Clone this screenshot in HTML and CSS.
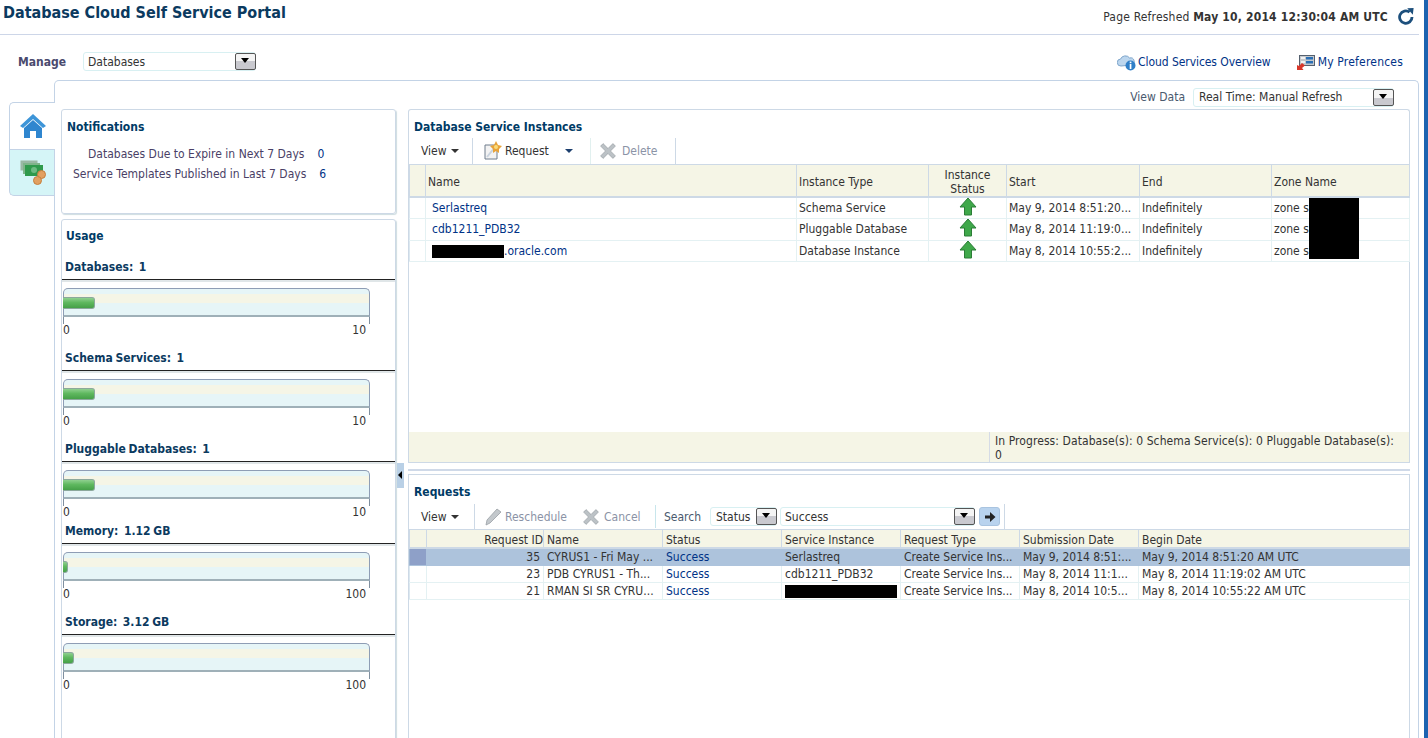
FILE: index.html
```html
<!DOCTYPE html>
<html lang="en">
<head>
    <meta charset="UTF-8">
    <title>Database Cloud Self Service Portal</title>
    <link rel="stylesheet" href="styles.css">
</head>
<body>
    <header class="top-bar">
        <h1>Database Cloud Self Service Portal</h1>
        <div class="refreshed">
            <span>Page Refreshed <b>May 10, 2014 12:30:04 AM UTC</b></span>
            <svg class="refresh-icon" width="18" height="18" viewBox="0 0 18 18">
                <path d="M12.6 5.2A6.2 6.2 0 1 0 15 10" fill="none" stroke="#1c4f7c" stroke-width="2.8"/>
                <path d="M10.2 1.2 L16.6 1 L15.8 7.8 Z" fill="#1c4f7c"/>
            </svg>
        </div>
    </header>

    <div class="manage-row">
        <label class="manage-label">Manage</label>
        <div class="select select-manage"><span>Databases</span><i class="select-btn"></i></div>
        <nav class="top-links">
            <a href="#" class="cloud-link">
                <svg width="19" height="18" viewBox="0 0 19 18">
                    <path d="M4 13 A3.5 3.5 0 0 1 3.6 6 A5 4.5 0 0 1 12.6 5 A3.6 3.6 0 0 1 14.5 12 L4 13Z" fill="#bcd6ee" stroke="#7fa6cc"/>
                    <circle cx="13.5" cy="12.5" r="5" fill="#2f7fc8"/>
                    <rect x="12.7" y="11" width="1.7" height="5" fill="#fff"/>
                    <rect x="12.7" y="8.6" width="1.7" height="1.6" fill="#fff"/>
                </svg>
                Cloud Services Overview
            </a>
            <a href="#" class="prefs-link">
                <svg width="20" height="18" viewBox="0 0 20 18">
                    <rect x="3.5" y="2.5" width="15" height="10" fill="#c4c8cc" stroke="#55606e"/>
                    <rect x="10" y="4" width="7" height="2.5" fill="#2a6fb5"/>
                    <rect x="10" y="8" width="7" height="2.5" fill="#2a6fb5"/>
                    <rect x="5" y="4" width="4" height="2" fill="#f2f2f2"/>
                    <rect x="5" y="8" width="4" height="2" fill="#f2f2f2"/>
                    <path d="M1 17 L1 12 L3 13 L6 10 L9 12.5 L6 15 L7.5 17 Z" fill="#d8372a"/>
                </svg>
                My Preferences
            </a>
        </nav>
    </div>

    <div class="workspace">
        <div class="side-tabs">
            <div class="side-tab side-tab-active">
                <svg width="28" height="26" viewBox="0 0 28 26">
                    <path d="M1 13 L14 1 L27 13 L24 15 L14 6 L4 15 Z" fill="#3d95d8"/>
                    <path d="M5 15 L14 7 L23 15 V25 H17 V18 H11 V25 H5 Z" fill="#2f86cf"/>
                </svg>
            </div>
            <div class="side-tab">
                <svg width="28" height="26" viewBox="0 0 28 26">
                    <rect x="2.5" y=".5" width="17" height="10" fill="#9ab8a4"/>
                    <rect x="5" y="3" width="17" height="11" fill="#7fb48a"/>
                    <rect x="7" y="5" width="18" height="11" fill="#2f9a4c"/>
                    <circle cx="16" cy="10" r="3" fill="#6dbb82"/>
                    <circle cx="23.5" cy="14.5" r="4" fill="#e2a060" stroke="#c57f3d"/>
                    <circle cx="19.5" cy="20.5" r="4" fill="#e2a060" stroke="#c57f3d"/>
                </svg>
            </div>
        </div>

        <div class="content">
            <div class="view-data">
                <span class="view-label">View Data</span>
                <div class="select select-view"><span>Real Time: Manual Refresh</span><i class="select-btn"></i></div>
            </div>

            <div class="columns">
                <aside class="left-col">
                    <section class="panel notifications">
                        <h2>Notifications</h2>
                        <div class="notice notice-first"><span>Databases Due to Expire in Next 7 Days</span><a href="#">0</a></div>
                        <div class="notice notice-second"><span>Service Templates Published in Last 7 Days</span><a href="#">6</a></div>
                    </section>

                    <section class="panel usage">
                        <h2>Usage</h2>

                        <h3>Databases:&nbsp; 1</h3>
                        <div class="meter">
                            <div class="track"><div class="fill" style="width: 32px"></div></div>
                            <div class="scale"><span>0</span><span>10</span></div>
                        </div>

                        <h3>Schema Services:&nbsp; 1</h3>
                        <div class="meter">
                            <div class="track"><div class="fill" style="width: 32px"></div></div>
                            <div class="scale"><span>0</span><span>10</span></div>
                        </div>

                        <h3>Pluggable Databases:&nbsp; 1</h3>
                        <div class="meter meter-short">
                            <div class="track"><div class="fill" style="width: 32px"></div></div>
                            <div class="scale"><span>0</span><span>10</span></div>
                        </div>

                        <h3>Memory:&nbsp; 1.12 GB</h3>
                        <div class="meter">
                            <div class="track"><div class="fill" style="width: 5px"></div></div>
                            <div class="scale"><span>0</span><span>100</span></div>
                        </div>

                        <h3>Storage:&nbsp; 3.12 GB</h3>
                        <div class="meter">
                            <div class="track"><div class="fill" style="width: 11px"></div></div>
                            <div class="scale"><span>0</span><span>100</span></div>
                        </div>
                    </section>
                </aside>

                <button class="collapse-handle"></button>

                <main class="right-col">
                    <section class="instances">
                        <h2>Database Service Instances</h2>
                        <div class="toolbar">
                            <div class="tool tool-view">View <i class="caret"></i></div>
                            <div class="tool tool-request">
                                <svg width="20" height="20" viewBox="0 0 20 20">
                                    <path d="M2 4 H14 V18 H2 Z" fill="#f3f3f3" stroke="#6f7d8c"/>
                                    <path d="M4 16 L12 6" stroke="#c9d3de" stroke-width="2"/>
                                    <path d="M13 0 L15 4 L19 5 L16 8 L16 12 L13 10 L10 12 L10 8 L7 5 L11 4 Z" fill="#e8a33a"/>
                                    <circle cx="13" cy="6" r="2" fill="#f9dc7a"/>
                                </svg>
                                Request <i class="caret caret-request"></i>
                            </div>
                            <div class="tool tool-disabled tool-delete">
                                <svg width="16" height="16" viewBox="1.5 1.5 13 13">
                                    <path d="M2 4 L4 2 L8 6 L12 2 L14 4 L10 8 L14 12 L12 14 L8 10 L4 14 L2 12 L6 8 Z" fill="#bcc2c6" stroke="#9aa1a6" stroke-width=".6"/>
                                </svg>
                                Delete
                            </div>
                        </div>

                        <div class="table-wrap">
                            <table class="grid grid-instances">
                                <colgroup>
                                    <col class="c-16"><col class="c-371"><col class="c-132"><col class="c-78"><col class="c-133"><col class="c-132"><col>
                                </colgroup>
                                <thead>
                                    <tr>
                                        <th></th><th>Name</th><th>Instance Type</th>
                                        <th class="center">Instance<br>Status</th>
                                        <th>Start</th><th>End</th><th>Zone Name</th>
                                    </tr>
                                </thead>
                                <tbody>
                                    <tr>
                                        <td></td><td class="pad-name"><a href="#">Serlastreq</a></td><td>Schema Service</td>
                                        <td class="center"><svg class="up-arrow" width="18" height="19" viewBox="0 0 18 19"><path d="M9 1 L17 10 H12.5 V18 H5.5 V10 H1 Z" fill="#3fa84a" stroke="#2b7d36"/></svg></td>
                                        <td>May 9, 2014 8:51:20...</td><td>Indefinitely</td><td>zone s</td>
                                    </tr>
                                    <tr>
                                        <td></td><td class="pad-name"><a href="#">cdb1211_PDB32</a></td><td>Pluggable Database</td>
                                        <td class="center"><svg class="up-arrow" width="18" height="19" viewBox="0 0 18 19"><path d="M9 1 L17 10 H12.5 V18 H5.5 V10 H1 Z" fill="#3fa84a" stroke="#2b7d36"/></svg></td>
                                        <td>May 8, 2014 11:19:0...</td><td>Indefinitely</td><td>zone s</td>
                                    </tr>
                                    <tr>
                                        <td></td><td class="pad-name"><i class="redact redact-host"></i><a href="#">.oracle.com</a></td><td>Database Instance</td>
                                        <td class="center"><svg class="up-arrow" width="18" height="19" viewBox="0 0 18 19"><path d="M9 1 L17 10 H12.5 V18 H5.5 V10 H1 Z" fill="#3fa84a" stroke="#2b7d36"/></svg></td>
                                        <td>May 8, 2014 10:55:2...</td><td>Indefinitely</td><td>zone s</td>
                                    </tr>
                                </tbody>
                            </table>
                            <div class="redact-zone"></div>
                        </div>

                        <div class="status-bar">
                            <div class="status-text">In Progress: Database(s): 0 Schema Service(s): 0 Pluggable Database(s): 0</div>
                        </div>
                    </section>

                    <div class="splitter"></div>

                    <section class="requests">
                        <h2>Requests</h2>
                        <div class="toolbar toolbar-requests">
                            <div class="tool tool-view tool-view-req">View <i class="caret"></i></div>
                            <div class="tool tool-disabled tool-reschedule">
                                <svg width="18" height="18" viewBox="0 0 18 18">
                                    <path d="M2 17 L3 12 L13 1 L17 4 L6 15 Z" fill="#c3c8cc" stroke="#9aa1a6" stroke-width=".8"/>
                                </svg>
                                Reschedule
                            </div>
                            <div class="tool tool-disabled tool-cancel">
                                <svg width="16" height="16" viewBox="1.5 1.5 13 13">
                                    <path d="M2 4 L4 2 L8 6 L12 2 L14 4 L10 8 L14 12 L12 14 L8 10 L4 14 L2 12 L6 8 Z" fill="#bcc2c6" stroke="#9aa1a6" stroke-width=".6"/>
                                </svg>
                                Cancel
                            </div>
                            <div class="search-box">
                                <span class="search-label">Search</span>
                                <div class="select select-status"><span>Status</span><i class="select-btn"></i></div>
                                <div class="select select-success"><span>Success</span><i class="select-btn"></i></div>
                                <button class="go-btn">
                                    <svg width="12" height="12" viewBox="0 0 12 12"><path d="M1 4.5 H6 V1 L11.5 6 L6 11 V7.5 H1 Z" fill="#222"/></svg>
                                </button>
                            </div>
                        </div>

                        <table class="grid grid-requests">
                            <colgroup>
                                <col class="c-17"><col class="c-117"><col class="c-119"><col class="c-119"><col class="c-119"><col class="c-119"><col class="c-119"><col>
                            </colgroup>
                            <thead>
                                <tr>
                                    <th></th><th class="right">Request ID</th><th>Name</th><th>Status</th>
                                    <th>Service Instance</th><th>Request Type</th><th>Submission Date</th><th>Begin Date</th>
                                </tr>
                            </thead>
                            <tbody>
                                <tr class="selected">
                                    <td class="row-head"></td><td class="right">35</td><td>CYRUS1 - Fri May ...</td><td><a href="#">Success</a></td>
                                    <td>Serlastreq</td><td>Create Service Ins...</td><td>May 9, 2014 8:51:...</td><td>May 9, 2014 8:51:20 AM UTC</td>
                                </tr>
                                <tr>
                                    <td></td><td class="right">23</td><td>PDB CYRUS1 - Th...</td><td><a href="#">Success</a></td>
                                    <td>cdb1211_PDB32</td><td>Create Service Ins...</td><td>May 8, 2014 11:1...</td><td>May 8, 2014 11:19:02 AM UTC</td>
                                </tr>
                                <tr>
                                    <td></td><td class="right">21</td><td>RMAN SI SR CYRU...</td><td><a href="#">Success</a></td>
                                    <td><i class="redact redact-service"></i></td><td>Create Service Ins...</td><td>May 8, 2014 10:5...</td><td>May 8, 2014 10:55:22 AM UTC</td>
                                </tr>
                            </tbody>
                        </table>
                    </section>
                </main>
            </div>
        </div>
    </div>
</body>
</html>
```

FILE: styles.css
```css
* {
    margin: 0;
    padding: 0;
    box-sizing: border-box;
}

html, body {
    height: 738px;
    overflow: hidden;
}

body {
    font-family: "DejaVu Sans Condensed", "DejaVu Sans", sans-serif;
    font-stretch: condensed;
    font-size: 12px;
    color: #333;
    background: #fff;
    border-right: 4px solid #1c63b0;
    width: 1428px;
}

a {
    color: #003286;
    text-decoration: none;
}

h1 {
    font-size: 16px;
    color: #0b3a5f;
    line-height: 26px;
}

h2 {
    font-size: 12px;
    color: #003b66;
    line-height: 16px;
}

/* top of page */
.top-bar {
    display: flex;
    justify-content: space-between;
    height: 35px;
    width: 1419px;
    padding-left: 3px;
    border-bottom: 1px solid #cdd6e8;
}

.refreshed {
    display: flex;
    align-items: flex-start;
    gap: 9px;
    padding-top: 7px;
    padding-right: 4px;
}

.refreshed span {
    line-height: 18px;
    padding-top: 1px;
    letter-spacing: .19px;
}

.manage-row {
    display: flex;
    align-items: center;
    height: 45px;
    width: 1419px;
    padding: 8px 16px 0 18px;
}

.manage-label {
    font-weight: bold;
    color: #4a4a6e;
    width: 65px;
}

.top-links {
    margin-left: auto;
    display: flex;
    gap: 25px;
}

.top-links a {
    display: flex;
    align-items: center;
    gap: 2px;
}

.cloud-link {
    letter-spacing: -.06px;
}

.prefs-link {
    letter-spacing: .2px;
}

/* select boxes */
.select {
    display: flex;
    justify-content: space-between;
    align-items: center;
    height: 19px;
    padding-left: 4px;
    border: 1px solid #d8f0f2;
    border-radius: 3px;
    background: #fff;
}

.select-manage {
    width: 173px;
}

.select-view {
    width: 201px;
    padding-left: 5px;
}

.select-status {
    width: 67px;
    padding-left: 5px;
}

.select-success {
    width: 195px;
    margin-left: 3px;
    padding-left: 4px;
}

.select-btn {
    position: relative;
    width: 21px;
    height: 17px;
    margin-right: -1px;
    border: 1px solid #555;
    border-radius: 2px;
    background: linear-gradient(#f4f4f4 50%, #c9c9cf 50%);
}

.select-btn::after {
    content: "";
    position: absolute;
    left: 5px;
    top: 4px;
    border-left: 4.5px solid transparent;
    border-right: 4.5px solid transparent;
    border-top: 5px solid #000;
}

/* main area */
.workspace {
    display: flex;
    padding-left: 9px;
    width: 1419px;
}

.side-tabs {
    width: 45px;
    padding-top: 22px;
}

.side-tab {
    display: flex;
    justify-content: center;
    align-items: center;
    height: 47px;
    background: #d5f5f7;
    border: 1px solid #c3d3e6;
    border-right: none;
    border-bottom-left-radius: 5px;
}

.side-tab-active {
    height: 47px;
    background: #fff;
    border-bottom: none;
    border-radius: 5px 0 0 0;
    margin-right: -1px;
    position: relative;
}

.content {
    flex: 1;
    height: 660px;
    border: 1px solid #c3d3e6;
    border-bottom: none;
    border-top-left-radius: 5px;
    border-top-right-radius: 5px;
    padding-left: 6px;
    padding-right: 8px;
}

.view-data {
    display: flex;
    justify-content: flex-end;
    align-items: center;
    gap: 8px;
    height: 28px;
    padding-top: 4px;
    padding-right: 16px;
}

.view-label {
    color: #4a5a6e;
}

.columns {
    display: flex;
    position: relative;
}

.left-col {
    width: 335px;
    flex: none;
}

.panel {
    border: 1px solid #cdd9e6;
    border-radius: 3px;
    box-shadow: 1px 1px 1px #cfdde0;
}

.notifications {
    height: 105px;
    padding: 9px 4px 0 5px;
}

.notice {
    color: #4a3f66;
    white-space: nowrap;
    line-height: 20px;
}

.notice a {
    margin-left: 13px;
}

.notice-first {
    padding-left: 21px;
    margin-top: 9px;
}

.notice-second {
    padding-left: 6px;
}

.usage {
    height: 530px;
    margin-top: 5px;
    padding-top: 8px;
}

.usage h2 {
    padding-left: 4px;
    margin-bottom: 15px;
}

.usage h3 {
    font-size: 12px;
    color: #0b3a5f;
    line-height: 16px;
    height: 21px;
    padding-left: 3px;
    word-spacing: -1px;
    border-bottom: 1px solid #222;
    box-shadow: 0 2px 0 #e0e6e8;
}

.meter {
    margin-left: 1px;
    padding-top: 8px;
    width: 307px;
    height: 70px;
}

.meter-short {
    height: 61px;
}

.track {
    position: relative;
    height: 29px;
    border: 1px solid #8e9db5;
    border-bottom: 2px solid #9fb0b8;
    border-radius: 5px 5px 0 0;
    background: linear-gradient(#e6f5f7 5px, #f5f5e6 5px, #f5f5e6 14px, #e6f5f7 14px);
}

.fill {
    position: absolute;
    left: -1px;
    top: 8px;
    height: 12px;
    border: 1px solid #8ba89c;
    border-left: none;
    border-radius: 0 3px 3px 0;
    background: linear-gradient(#8fd08f, #5fb85f 45%, #45a048);
}

/* the two end ticks are just 7px tall */
.scale {
    display: flex;
    justify-content: space-between;
    height: 20px;
    padding: 6px 4px 0 0;
    line-height: 14px;
    background:
        linear-gradient(#7f8f9f, #7f8f9f) left top / 1px 7px no-repeat,
        linear-gradient(#7f8f9f, #7f8f9f) right top / 1px 7px no-repeat;
}

/* right side */
.right-col {
    margin-left: 12px;
    width: 1002px;
    flex: none;
}

.collapse-handle {
    position: absolute;
    left: 336px;
    top: 354px;
    width: 7px;
    height: 25px;
    border: none;
    background: #b9d0e6;
}

.collapse-handle::after {
    content: "";
    position: absolute;
    left: 1px;
    top: 8px;
    border-top: 4px solid transparent;
    border-bottom: 4px solid transparent;
    border-right: 4px solid #000;
}

.instances {
    position: relative;
    height: 354px;
    border: 1px solid #cdd9e6;
    border-bottom: none;
    border-radius: 3px 3px 0 0;
    padding-top: 9px;
}

.instances h2,
.requests h2 {
    padding-left: 5px;
}

.toolbar {
    display: flex;
    height: 27px;
    margin-top: 3px;
    border-bottom: 1px solid #cdd9e6;
}

.tool {
    display: flex;
    align-items: center;
    height: 26px;
    white-space: nowrap;
}

.tool-view {
    width: 64px;
    padding-left: 12px;
    gap: 4px;
    border-right: 1px solid #cdd9e6;
}

.tool-request {
    width: 118px;
    padding-left: 10px;
    gap: 2px;
    border-right: 1px solid #e1f0ef;
}

.tool-delete {
    width: 85px;
    padding-left: 9px;
    gap: 6px;
    border-right: 1px solid #cdd9e6;
}

.tool-disabled {
    color: #8b93a6;
}

.caret {
    border-left: 4px solid transparent;
    border-right: 4px solid transparent;
    border-top: 4px solid #333;
}

.caret-request {
    margin-left: 14px;
    border-top-color: #1c3f6e;
}

.table-wrap {
    position: relative;
}

.grid {
    table-layout: fixed;
    border-collapse: collapse;
    width: 1001px;
}

.c-16 { width: 16px; }
.c-17 { width: 17px; }
.c-78 { width: 78px; }
.c-117 { width: 117px; }
.c-119 { width: 119px; }
.c-132 { width: 132px; }
.c-133 { width: 133px; }
.c-371 { width: 371px; }

.grid th {
    background: #f5f5e6;
    font-weight: normal;
    text-align: left;
    padding: 2px 2px 0;
    border: 1px solid #cdd9e6;
    border-top: none;
    border-bottom-width: 2px;
    line-height: 14px;
    color: #333;
}

.grid td {
    padding: 0 2px;
    border: 1px solid #e4f1f3;
    border-left-color: #dce8f0;
    white-space: nowrap;
    overflow: hidden;
}

.grid-instances th {
    height: 32px;
}

.grid-instances td {
    height: 21.5px;
}

.grid-requests th {
    height: 18px;
    padding: 2px 0 0 3px;
}

.grid-requests td {
    height: 17px;
    line-height: 16px;
    padding: 0 3px;
}

.pad-name {
    padding-left: 6px !important;
}

.center {
    text-align: center !important;
}

.right {
    text-align: right !important;
}

.up-arrow {
    display: block;
    margin: -3px auto 0;
}

.redact {
    display: inline-block;
    background: #000;
}

.redact-host {
    width: 72px;
    height: 13px;
    vertical-align: middle;
}

.redact-service {
    width: 112px;
    height: 13px;
    vertical-align: middle;
}

.redact-zone {
    position: absolute;
    left: 900px;
    top: 33px;
    width: 50px;
    height: 61px;
    background: #000;
}

.status-bar {
    position: absolute;
    left: 0;
    right: 0;
    bottom: 0;
    height: 31px;
    background: #f5f5e6;
    border-bottom: 1px solid #cdd9e6;
    padding-left: 580px;
}

.status-text {
    height: 100%;
    border-left: 1px solid #d5dbe6;
    padding: 2px 11px 0 5px;
    line-height: 14px;
    letter-spacing: .08px;
}

.splitter {
    height: 12px;
    border-bottom: 1px solid #cdd9e6;
    background: linear-gradient(#fff 6px, #cfd9e8 6px, #cfd9e8 8px, #fff 8px);
}

.requests {
    height: 264px;
    border: 1px solid #cdd9e6;
    border-top: none;
    padding-top: 9px;
}

.toolbar-requests {
    margin-top: 4px;
    height: 26px;
    border-bottom: 1px solid #cdd9e6;
}

.toolbar-requests .tool {
    height: 25px;
}

.tool-view-req {
    width: 66px;
}

.tool-reschedule {
    padding-left: 9px;
    gap: 3px;
    width: 108px;
}

.toolbar-requests .tool-cancel {
    gap: 5px;
    width: 73px;
    border-right: 1px solid #c8e6ec;
    height: 23px;
    margin-top: 1px;
}

.search-box {
    display: flex;
    align-items: center;
    height: 25px;
    padding-left: 8px;
    padding-right: 4px;
    border-right: 1px solid #cdd9e6;
}

.search-label {
    width: 46px;
    color: #4a5a6e;
}

.go-btn {
    display: flex;
    justify-content: center;
    align-items: center;
    width: 21px;
    height: 19px;
    margin-left: 4px;
    border: 1px solid #a9c4e0;
    border-radius: 3px;
    background: #b9d3ee;
}

.selected td {
    background: #adc3dc;
    border-color: #adc3dc;
    border-left-color: #9fb6d2;
}

.selected .row-head {
    background: #8ea0c8;
}
```
